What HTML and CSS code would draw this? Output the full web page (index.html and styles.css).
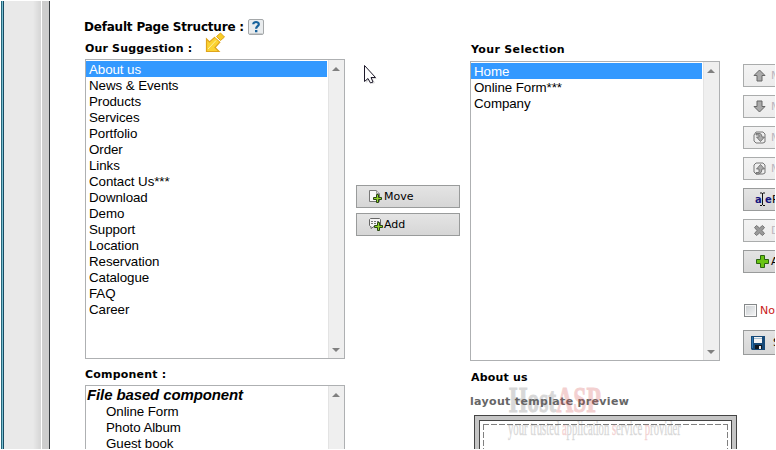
FILE: index.html
```
<!DOCTYPE html>
<html lang="en">
<head>
<meta charset="utf-8">
<title>Default Page Structure</title>
<link rel="stylesheet" href="styles.css">
</head>
<body>
<div class="window">
  <div class="edge"></div><div class="gutter"></div><div class="rail"></div>
  <main class="content">
    <section class="suggest">
      <h1 class="title"><span>Default Page Structure :</span>
        <svg class="help" width="16" height="16" viewBox="0 0 16 16"><rect x=".5" y=".5" width="15" height="15" rx="1.5" fill="#e9ecee" stroke="#a5a8aa"/><path d="M1.5 14.5h13" stroke="#c9cccd"/><path d="M5.3 5.2C5.2 2.4 10.8 2.2 10.8 5.2c0 2-2.7 2-2.7 4.600M7 12.2h2.4" fill="none" stroke="#17629c" stroke-width="2.2"/></svg>
      </h1>
      <h2 class="label label-s"><span>Our Suggestion :</span></h2>
      <div class="list list-s">
        <ul class="options">
          <li class="on">About us</li><li>News &amp; Events</li><li>Products</li><li>Services</li><li>Portfolio</li><li>Order</li><li>Links</li><li>Contact Us***</li><li>Download</li><li>Demo</li><li>Support</li><li>Location</li><li>Reservation</li><li>Catalogue</li><li>FAQ</li><li>Career</li>
        </ul>
        <div class="bar"><i class="up"></i><i class="down"></i></div>
      </div>
      <h2 class="label label-c"><span>Component :</span></h2>
      <div class="list list-c">
        <ul class="options">
          <li class="group">File based component</li><li class="sub">Online Form</li><li class="sub">Photo Album</li><li class="sub">Guest book</li>
        </ul>
        <div class="bar"><i class="up"></i></div>
      </div>
    </section>
    <section class="transfer">
      <button class="btn"><svg width="15" height="15" viewBox="0 0 15 15"><path d="M1.500 1.500h7l3 3v8h-10z" fill="#f8f8f8" stroke="#777"/><path d="M8.500 1.500v3h3" fill="#ddd" stroke="#999"/><path d="M8.500 5.500h2v3h3v2h-3v3h-2v-3h-3v-2h3z" fill="#92d22c" stroke="#284513"/></svg><span>Move</span></button>
      <button class="btn"><svg width="15" height="15" viewBox="0 0 15 15"><path d="M2.500 1.500h9l1 1v7H6l-3 2v-2H2.500l-1-1v-6z" fill="#f5f5f5" stroke="#666"/><path d="M3 4.500h8M3 6.500h7" stroke="#777" stroke-dasharray="2 1"/><path d="M9.500 5.500h2v3h3v2h-3v3h-2v-3h-3v-2h3z" fill="#92d22c" stroke="#284513"/></svg><span>Add</span></button>
    </section>
    <section class="selection">
      <h2 class="label label-y"><span>Your Selection</span></h2>
      <div class="list list-y">
        <ul class="options"><li class="on">Home</li><li>Online Form***</li><li>Company</li></ul>
        <div class="bar"><i class="up"></i><i class="down"></i></div>
      </div>
      <h2 class="label label-a"><span>About us</span></h2>
      <h2 class="label label-p"><span>layout template preview</span></h2>
      <div class="preview"><div class="sheet"><div class="dash"></div></div></div>
    </section>
    <section class="actions">
      <button class="btn off"><svg width="13" height="13" viewBox="0 0 13 13"><path d="M6.500 1l5.500 5.500H9V12H4V6.500H1z" fill="#aaa" stroke="#666"/></svg><span>Move Up</span></button>
      <button class="btn off"><svg width="13" height="13" viewBox="0 0 13 13"><path d="M6.500 12L1 6.500h3V1h5v5.500h3z" fill="#aaa" stroke="#666"/></svg><span>Move Down</span></button>
      <button class="btn off"><svg width="13" height="13" viewBox="0 0 13 13"><path d="M3 1h7l2 2v8l-2 1H3l-2-2V4z" fill="#eee" stroke="#777"/><path d="M3 2.500h4Q9 3 9 6h2.500L7.500 10.500 3.500 6H6V4H3z" fill="#aaa" stroke="#666" stroke-width=".8"/></svg><span>Move In</span></button>
      <button class="btn off"><svg width="13" height="13" viewBox="0 0 13 13"><path d="M3 1h7l2 2v8l-2 1H3l-2-2V3z" fill="#eee" stroke="#777"/><path d="M3 10.500h3V7H3.500L7.500 2.500 11.500 7H9Q9 11 6 12H3z" fill="#aaa" stroke="#666" stroke-width=".8"/></svg><span>Move Out</span></button>
      <button class="btn rename"><b class="ae">a</b><svg width="5" height="15" viewBox="0 0 5 15"><path d="M0 1h2M3 1h2M2.500 1v12M0 13.500h2M3 13.500h2" fill="none" stroke="#111"/></svg><b class="ae">e</b><span>Rename</span></button>
      <button class="btn off"><svg class="cross" width="13" height="13" viewBox="0 0 13 13"><path d="M3.500 1.500l3 2.500 3-2.500 2 2L9 6.500l2.500 3-2 2-3-2.500-3 2.500-2-2L4 6.500l-2.500-3z" fill="#999" stroke="#777"/></svg><span>Delete</span></button>
      <button class="btn add"><svg width="13" height="13" viewBox="0 0 13 13"><path d="M4.500.5h4v4h4v4h-4v4h-4v-4h-4v-4h4z" fill="#69c414" stroke="#2b6411"/></svg><span>Add</span></button>
      <label class="check"><i></i><span>Not</span></label>
      <button class="btn save"><svg width="14" height="14" viewBox="0 0 14 14"><path d="M0 0h14v14H1l-1-1z" fill="#174a78"/><path d="M3 1h8v6H3z" fill="#f4f4f4"/><path d="M3 2.500h8" stroke="#a6bfd2"/><path d="M4 9h7v4H4z" fill="#101820"/><path d="M8 10h2v3H8z" fill="#eee"/><path d="M1.500 1v11" stroke="#2d78b4"/></svg><span>Save</span></button>
    </section>
  </main>
</div>
<svg class="pointer arrow" width="22" height="22" viewBox="0 0 22 22"><path d="M1.500 7l3 3L10 5l5 5-5 5.500 4 4H1.500z" fill="#fbd332" stroke="#e0a51c" stroke-width="1.200"/><path d="M10.800 4.500l4.700-4 4.500 4.500-4.300 4z" fill="#f8cc25" stroke="#fff" stroke-width="2"/><path d="M11.500 4.500l4-3.500 4 4-4 3.500z" fill="#f8cc25" stroke="#dca31b"/><path d="M3 17l8-8.500" stroke="#fff0a0"/></svg>
<svg class="pointer cursor" width="16" height="22" viewBox="0 0 16 22"><path d="M3 3v16l4-3 2 4 3-1-2-4h4z" fill="#ddd"/><path d="M1.500 1.500v16l3.500-3 2.500 4.500 2.500-1-2-4.500h4.500z" fill="#fff" stroke="#1c1829"/></svg>
<div class="mark brand"><span>Host<em>ASP</em></span></div>
<div class="mark motto"><span>your trusted <em>a</em>pplication <em>s</em>ervice <em>p</em>rovider</span></div>
</body>
</html>
```
FILE: styles.css
```
* { box-sizing: border-box; }
html { overflow: hidden; }
body { margin: 0; width: 776px; height: 450px; overflow: hidden; background: #fff; position: relative; font-family: "DejaVu Sans", sans-serif; color: #000; }
h1, h2, ul { margin: 0; padding: 0; }
.window { display: flex; width: 775px; height: 449px; padding: 1px 0 0 1px; overflow: hidden; }
.edge { flex: none; width: 3px; background: linear-gradient(90deg, #28677c 1px, #77bfd2 1px, #77bfd2 2px, #184b62 2px); }
.gutter { flex: none; width: 37px; background: linear-gradient(90deg, #e9e9e9 29px, #d5d5d5); }
.rail { flex: none; width: 9px; border-left: 1px solid #fff; border-right: 1px solid #363b3f; background: #cdcdcd; }
.content { display: flex; flex: 1; min-width: 0; overflow: hidden; padding-left: 35px; }
.content > section { flex: none; }
.suggest { width: 260px; }
.transfer { width: 104px; margin-left: 11px; padding-top: 184px; display: flex; flex-direction: column; gap: 5px; }
.selection { width: 267px; margin-left: 10px; }
.actions { width: 104px; margin-left: 6px; padding-top: 63px; display: flex; flex-direction: column; gap: 8px; }
.title { display: flex; height: 37px; padding-top: 18px; font-size: 12px; line-height: 16px; white-space: nowrap; }
.title span { width: 164px; margin-left: -1px; letter-spacing: -.2px; }
.label { font-size: 11px; line-height: 15px; white-space: nowrap; }
.label-s { height: 21px; padding-top: 3px; letter-spacing: .17px; }
.label-c { height: 26px; padding-top: 8px; letter-spacing: .2px; }
.label-y { height: 60px; padding: 41px 0 0 1px; letter-spacing: .35px; }
.label-a { height: 24px; padding: 9px 0 0 1px; letter-spacing: .2px; }
.label-p { height: 30px; padding-top: 9px; color: #666; letter-spacing: .33px; }
.list { display: flex; width: 260px; border: 1px solid #aeb0b2; background: #fff; }
.list-s, .list-y { height: 300px; }
.list-y { width: 250px; }
.list-c { height: 80px; }
.options { flex: 1; padding: 1px 1px 0 0; list-style: none; font: 13.333px/16px "Liberation Sans", sans-serif; letter-spacing: -.07px; }
.options li { height: 16px; padding: 1px 0 0 3px; white-space: nowrap; }
.options .on { background: #3399ff; color: #fff; }
.options .group { padding: 0 0 0 1px; font-weight: bold; font-style: italic; font-size: 15px; letter-spacing: -.12px; }
.options .sub { padding-left: 20px; }
.bar { display: flex; flex-direction: column; justify-content: space-between; align-items: center; width: 16px; padding: 7px 1px 6px 0; background: #efefef; border-left: 1px solid #e3e3e3; }
.up, .down { border: 4px solid transparent; border-top-width: 0; border-bottom: 4px solid #808080; }
.down { border-top: 4px solid #808080; border-bottom-width: 0; }
.btn { display: flex; align-items: center; flex: none; width: 104px; height: 23px; margin: 0; padding: 0 0 0 11px; border: 1px solid #999b9b; background: linear-gradient(#e4e4e4, #d6d6d6); font: 11px "DejaVu Sans", sans-serif; color: #000; white-space: nowrap; }
.btn svg { flex: none; }
.btn span { margin-left: 1px; }
.actions .btn { padding-left: 9px; }
.actions .btn span { margin-left: 5px; }
.actions .off { background: linear-gradient(#f3f3f3, #ececec); border-color: #aaacac; color: #bcb6be; }
.actions .rename { padding-left: 11px; }
.actions .rename span { margin-left: 2px; }
.actions .add span { margin-left: 2px; }
.actions .add { padding-left: 12px; }
.ae { color: #15157e; font-size: 10px; width: 5px; letter-spacing: -1px; }
.check { display: flex; align-items: center; gap: 3px; height: 15px; margin-top: 22px; padding-left: 1px; font-size: 11px; color: #c91818; }
.check i { flex: none; width: 13px; height: 13px; border: 1px solid #85888a; box-shadow: inset 0 0 0 1px #f8f8f8; background: linear-gradient(135deg, #c9cdd0, #f5f6f7); }
.actions .save { height: 25px; margin-top: 4px; padding-left: 7px; }
.actions .save span { margin-left: 8px; }
.preview { width: 263px; height: 90px; margin-left: 4px; padding: 4px; border: 1px solid #444; background: #c5c5c5; }
.sheet { height: 100px; padding: 3px; border: 1px solid #444; background: #fff; }
.dash { height: 100px; background: repeating-linear-gradient(90deg, #808080 0 6px, transparent 6px 8px) 0 0 / 100% 1px no-repeat, repeating-linear-gradient(#808080 0 6px, transparent 6px 8px) 0 0 / 1px 100% no-repeat, repeating-linear-gradient(#808080 0 6px, transparent 6px 8px) 100% 0 / 1px 100% no-repeat; }
.pointer { position: absolute; }
.arrow { left: 205px; top: 32px; }
.cursor { left: 363px; top: 64px; }
.mark { position: absolute; white-space: nowrap; font-family: "Liberation Serif", serif; color: #666; opacity: .25; }
.mark span { display: inline-block; transform-origin: 0 0; }
.mark em { font-style: normal; color: #d34848; }
.brand { left: 509px; top: 382px; width: 91px; font-weight: bold; font-size: 36px; line-height: 36px; }
.brand span { transform: scaleX(.656); -webkit-text-stroke: 1px; }
.motto { left: 508px; top: 418px; width: 173px; font-size: 20px; line-height: 20px; }
.motto span { transform: scaleX(.533); -webkit-text-stroke: .4px; }
```
